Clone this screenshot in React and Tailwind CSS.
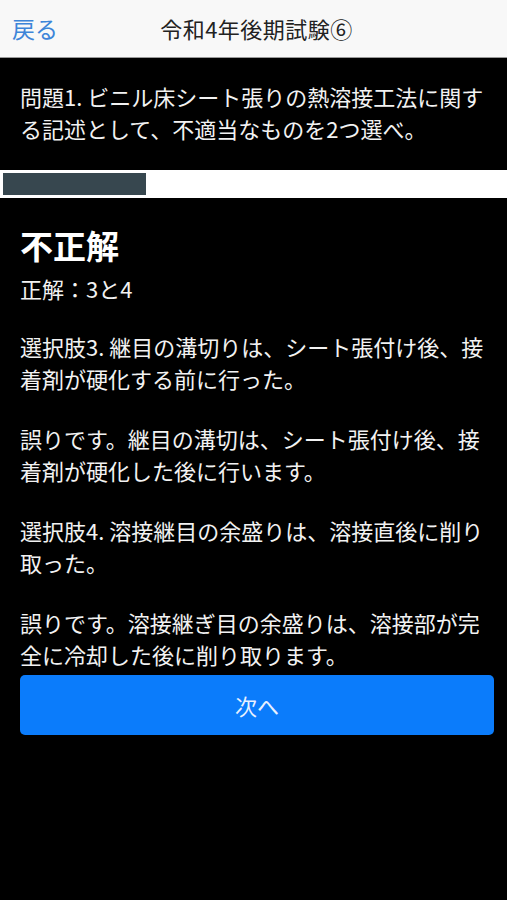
const font = { fontFamily: '"Noto Sans CJK JP", "Noto Sans", sans-serif' }

export default function App() {
  const paragraphs = [
    "選択肢3. 継目の溝切りは、シート張付け後、接着剤が硬化する前に行った。",
    "誤りです。継目の溝切は、シート張付け後、接着剤が硬化した後に行います。",
    "選択肢4. 溶接継目の余盛りは、溶接直後に削り取った。",
    "誤りです。溶接継ぎ目の余盛りは、溶接部が完全に冷却した後に削り取ります。",
  ]

  return (
    <div className="min-h-[900px] w-full bg-black text-white" style={font}>
      {/* ヘッダー */}
      <div className="relative flex h-[58px] items-center justify-center border-b border-[#9a9a9a] bg-[#f8f8f8]">
        <span className="absolute left-[12px] text-[23px] text-[#3d85d8]">戻る</span>
        <span className="pl-[6px] text-[22px] tracking-[0.5px] text-[#222]">令和4年後期試験⑥</span>
      </div>

      {/* 問題文 */}
      <p className="px-5 pt-[22px] text-[22px] leading-[32px] text-[#f2f2f2]">
        問題1. ビニル床シート張りの熱溶接工法に関する記述として、不適当なものを2つ選べ。
      </p>

      {/* 進捗バー */}
      <div className="mt-[26px] h-[28px] w-full bg-white p-[3px]">
        <div className="h-full w-[143px] bg-[#37474f]" />
      </div>

      {/* 結果 */}
      <div className="px-5">
        <h1 className="mt-[26px] text-[33px] font-bold leading-[42px]">不正解</h1>
        <p className="mt-[6px] text-[22px] leading-[32px] text-[#f2f2f2]">正解：3と4</p>
        <div className="mt-[26px] flex flex-col gap-[28px]">
          {paragraphs.map((t) => (
            <p key={t} className="text-[22px] leading-[32px] text-[#f2f2f2]">
              {t}
            </p>
          ))}
        </div>
        <button className="mt-[5px] flex h-[60px] w-[474px] items-center justify-center rounded-[5px] bg-[#0b7cfb] text-[22px] text-[#e8f1ff]">
          次へ
        </button>
      </div>
    </div>
  )
}
